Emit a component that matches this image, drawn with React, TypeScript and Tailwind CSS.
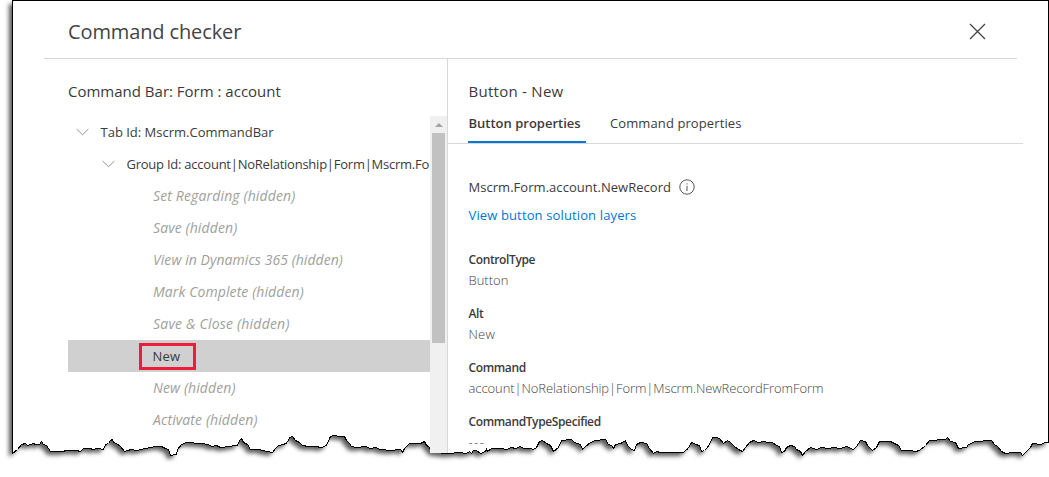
const TORN_LEFT =
  '37,100 52,88 63,72 75,70 82,75 100,71 106,74 112,72 118,72 124,65 130,74 138,75 145,84 152,95 190,95 197,92 230,91 240,93 250,84 270,84 276,89 295,85 311,88 316,74 325,70 331,60 337,58 341,66 348,70 360,78 372,93 382,90 395,87 410,91 435,86 450,82 465,78 485,78 495,84 505,88 512,106 528,103 532,88 545,74 560,68 600,70 625,74 635,79 650,75 660,82 690,80 700,77 712,77 718,60 724,56 730,68 742,72 750,87 780,87 785,92 803,94 818,97 826,86 835,76 850,72 862,67 868,53 876,50 885,62 898,66 906,77 925,80 945,78 965,83 978,75 990,50 1000,46 1020,50 1032,50 1040,62 1048,70';
const TORN_MIDDLE =
  '5,79 20,83 45,79 60,85 75,82 90,87 120,92 150,89 156,96 163,85 178,71 210,70 222,65 228,76 236,80 245,94 258,98 285,101 300,99 325,98 350,100 358,93 364,100 370,92 380,92 390,100 405,95 408,88 413,94 425,86 440,84 455,86 470,88 485,81 495,86 510,80 520,86 540,84 550,89 560,83 568,65 578,62 590,70 600,75 610,94 625,82 635,60 665,59 672,68 690,73 698,88 705,80 720,68 735,60 765,59 775,72 783,76 789,86 797,72 810,70 818,68 825,62 832,75 843,88 853,91 860,72 870,68 890,70 897,84 909,100 918,94 930,97 1000,97 1008,88 1015,85 1022,70 1028,66 1035,72 1048,75';
const TORN_RIGHT =
  '3,94 12,92 20,85 28,73 38,53 48,52 58,55 70,70 82,62 92,66 103,78 115,88 127,94 135,82 147,68 160,62 175,68 190,65 205,68 218,66 230,76 237,80 245,97 254,94 258,82 270,77 283,80 290,88 300,94 307,106 315,94 330,83 348,89 365,83 385,86 400,82 420,86 440,80 460,88 470,80 480,62 495,64 503,76 510,84 518,91 528,82 537,64 550,63 570,63 578,68 595,75 605,92 630,90 645,94 658,90 675,76 688,60 735,59 741,53 750,63 765,67 775,84 800,82 805,72 825,63 875,60 882,73 893,78 905,95 915,99 940,96 962,97 968,105 978,94 990,82 998,71 1020,73 1037,68 1044,66';

const toPoints = (list: string, offset: number) =>
  list
    .split(' ')
    .map((pair) => {
      const [x, y] = pair.split(',').map(Number);
      return `${Math.floor((x + offset) / 3) + 0.5},${Math.floor(y / 3) + 420.5}`;
    })
    .join(' ');

const SHEET = `12.5,0.5 ${toPoints(TORN_LEFT, 0)} ${toPoints(TORN_MIDDLE, 1050)} ${toPoints(TORN_RIGHT, 2100)} 1048.5,441.5 1048.5,0.5`;

function PaperSheet() {
  return (
    <svg className="absolute inset-0" width="1049" height="477" viewBox="0 0 1049 477" aria-hidden="true">
      <defs>
        <filter
          id="sheet-shadow"
          filterUnits="userSpaceOnUse"
          x="0"
          y="0"
          width="1049"
          height="477"
          colorInterpolationFilters="sRGB"
        >
          <feDropShadow dx="-3.5" dy="3.5" stdDeviation="2" floodColor="#000" floodOpacity="0.65" />
        </filter>
      </defs>
      <polygon points={SHEET} fill="#fff" filter="url(#sheet-shadow)" />
      <polygon points={SHEET} fill="#fff" stroke="#000" strokeWidth="1" shapeRendering="crispEdges" />
    </svg>
  );
}

function Chevron() {
  return (
    <svg className="shrink-0" width="13" height="8" viewBox="0 0 13 8" fill="none" stroke="#8a8886" strokeWidth="0.9">
      <path d="M.6 1 6.5 6.7 12.4 1" />
    </svg>
  );
}

const ITEMS: { label: string; track: string }[] = [
  { label: 'Set Regarding (hidden)', track: 'tracking-[0.14px]' },
  { label: 'Save (hidden)', track: 'tracking-[0.11px]' },
  { label: 'View in Dynamics 365 (hidden)', track: 'tracking-[0.06px]' },
  { label: 'Mark Complete (hidden)', track: 'tracking-[0.1px]' },
  { label: 'Save & Close (hidden)', track: 'tracking-[0.21px]' },
  { label: 'New', track: 'tracking-[0.2px]' },
  { label: 'New (hidden)', track: 'tracking-[0.11px]' },
  { label: 'Activate (hidden)', track: 'tracking-[0.11px]' },
];

const FIELDS: { name: string; value: string; track: string }[] = [
  { name: 'ControlType', value: 'Button', track: '' },
  { name: 'Alt', value: 'New', track: 'tracking-[0.2px]' },
  { name: 'Command', value: 'account|NoRelationship|Form|Mscrm.NewRecordFromForm', track: 'tracking-[-0.08px]' },
  { name: 'CommandTypeSpecified', value: '---', track: 'tracking-[1.4px]' },
];

function CommandTree() {
  return (
    <div className="flex h-[337px]">
      <div className="w-[362px] overflow-hidden whitespace-nowrap text-[13px] text-[#3b3b3b]">
        <div className="flex h-8 items-center gap-3 pl-[7.5px]">
          <Chevron />
          <span className="pt-px">Tab Id: Mscrm.CommandBar</span>
        </div>
        <div className="flex h-8 items-center gap-3 pl-[33.5px]">
          <Chevron />
          <span className="pt-px tracking-[-0.24px]">Group Id: account|NoRelationship|Form|Mscrm.Fo</span>
        </div>
        {ITEMS.map(({ label, track }) =>
          label === 'New' ? (
            <div key={label} className="flex h-8 items-center bg-[#d0d0d0] pl-[71px]">
              <span className={`flex h-[27px] w-[57px] items-center border-[3px] border-[#ee1c36] pt-px pl-[10.5px] ${track}`}>
                {label}
              </span>
            </div>
          ) : (
            <div key={label} className="flex h-8 items-center pl-[85px] text-sm text-[#a19f9d] italic">
              <span className={track}>{label}</span>
            </div>
          ),
        )}
      </div>
      <div className="flex w-[17px] flex-col items-center bg-[#f0f0f0]">
        <div className="flex h-[17px] items-center pt-px">
          <svg width="8" height="4" viewBox="0 0 8 4" fill="#a3a3a3">
            <path d="M4 0 8 4H0Z" />
          </svg>
        </div>
        <div className="h-[210px] w-[13px] bg-[#c1c1c1]" />
      </div>
    </div>
  );
}

export default function App() {
  return (
    <div className="relative h-[477px] w-[1049px] overflow-hidden bg-white font-['Open_Sans','Noto_Sans',sans-serif] text-[#3b3b3b]">
      <PaperSheet />
      <div className="relative flex h-[453px] flex-col pt-px pl-[44px]">
        <header className="flex h-[58px] w-[973px] shrink-0 items-center justify-between border-b border-[#d8d8d8] pt-[3px] pr-[31.5px] pl-6">
          <h1 className="pt-[2px] text-xl tracking-[-0.12px] text-[#444]">Command checker</h1>
          <svg className="mt-px" width="17" height="17" viewBox="0 0 17 17" stroke="#444" strokeWidth="1.3">
            <path d="M1 1 16 16M16 1 1 16" />
          </svg>
        </header>
        <div className="flex min-h-0 flex-1">
          <section className="w-[404px] border-r border-[#d8d8d8] pl-6">
            <h2 className="h-[57px] pt-[22px] text-[15px] leading-5">Command Bar: Form : account</h2>
            <CommandTree />
          </section>
          <section className="w-[575px] overflow-hidden">
            <h2 className="h-[44px] pt-[22px] pl-[20.5px] text-[15px] leading-5 tracking-[0.27px]">Button - New</h2>
            <nav className="flex h-[41px] border-b border-[#d8d8d8] pl-5 text-[13px] leading-5">
              <div className="h-[40px] w-[118px] border-b-2 border-[#0078d4] pt-[10px] pl-[0.5px] font-semibold">
                Button properties
              </div>
              <div className="pt-[10px] pl-6 tracking-[0.1px]">Command properties</div>
            </nav>
            <div className="flex flex-col pl-[20.5px]">
              <div className="mt-[33px] flex h-5 items-center gap-2 text-[13px] leading-5">
                <span className="tracking-[0.04px]">Mscrm.Form.account.NewRecord</span>
                <svg width="16" height="16" viewBox="0 0 16 16" fill="none" stroke="#555" strokeWidth="1">
                  <circle cx="8" cy="8" r="7.2" />
                  <path d="M8 6.8V12M8 4.3V5.5" />
                </svg>
              </div>
              <a className="mt-2 text-[13px] leading-5 tracking-[0.13px] text-[#0078d4]">View button solution layers</a>
              <dl className="mt-6 flex flex-col gap-[14px] leading-5">
                {FIELDS.map(({ name, value, track }) => (
                  <div key={name} className="h-10">
                    <dt className="pt-px text-xs leading-[19px] font-semibold tracking-[-0.38px]">{name}</dt>
                    <dd className={`text-[13px] leading-[22px] font-light text-[#444] ${track}`}>{value}</dd>
                  </div>
                ))}
              </dl>
            </div>
          </section>
        </div>
      </div>
    </div>
  );
}
